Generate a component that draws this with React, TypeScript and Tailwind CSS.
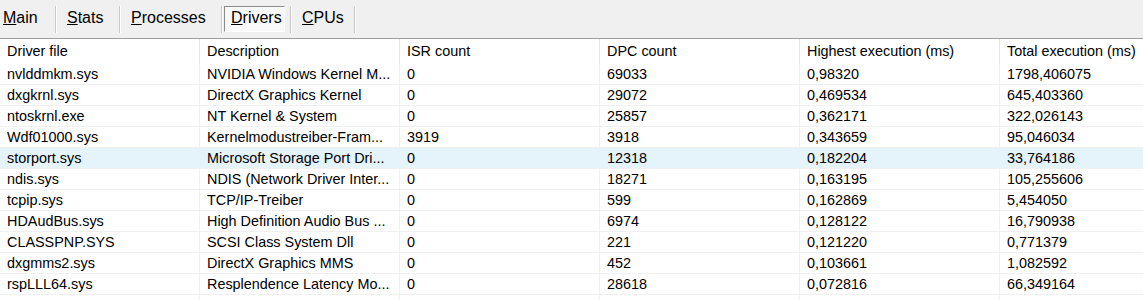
import React from 'react'

const tabs = [
  { key: 'M', rest: 'ain', w: 'w-[55px] pl-[3px]' },
  { key: 'S', rest: 'tats', w: 'w-[62px] pl-[10px]' },
  { key: 'P', rest: 'rocesses', w: 'w-[100px] pl-[10px]' },
]

const columns = ['Driver file', 'Description', 'ISR count', 'DPC count', 'Highest execution (ms)', 'Total execution (ms)']

const rows = [
  ['nvlddmkm.sys', 'NVIDIA Windows Kernel M...', '0', '69033', '0,98320', '1798,406075'],
  ['dxgkrnl.sys', 'DirectX Graphics Kernel', '0', '29072', '0,469534', '645,403360'],
  ['ntoskrnl.exe', 'NT Kernel & System', '0', '25857', '0,362171', '322,026143'],
  ['Wdf01000.sys', 'Kernelmodustreiber-Fram...', '3919', '3918', '0,343659', '95,046034'],
  ['storport.sys', 'Microsoft Storage Port Dri...', '0', '12318', '0,182204', '33,764186'],
  ['ndis.sys', 'NDIS (Network Driver Inter...', '0', '18271', '0,163195', '105,255606'],
  ['tcpip.sys', 'TCP/IP-Treiber', '0', '599', '0,162869', '5,454050'],
  ['HDAudBus.sys', 'High Definition Audio Bus ...', '0', '6974', '0,128122', '16,790938'],
  ['CLASSPNP.SYS', 'SCSI Class System Dll', '0', '221', '0,121220', '0,771379'],
  ['dxgmms2.sys', 'DirectX Graphics MMS', '0', '452', '0,103661', '1,082592'],
  ['rspLLL64.sys', 'Resplendence Latency Mo...', '0', '28618', '0,072816', '66,349164'],
  ['', '', '', '', '', ''],
]

function Sep() {
  return <div className="h-[27px] w-[2px] shrink-0 border-l border-[#c9c9c9] border-r border-r-white" />
}

export default function App() {
  return (
    <div className="h-[300px] w-[1143px] overflow-hidden bg-white text-black font-['Liberation_Sans',Arial,sans-serif]">
      {/* Tab toolbar */}
      <div className="h-[39px] bg-[#f0f0f0] border-b border-[#a0a0a0] flex items-center text-[16px] leading-none">
        {tabs.map(t => (
          <React.Fragment key={t.key}>
            <div className={`${t.w} shrink-0 pb-[2px]`}>
              <span className="underline underline-offset-1">{t.key}</span>{t.rest}
            </div>
            <Sep />
          </React.Fragment>
        ))}
        <div className="ml-[1px] mr-[5px] h-[26px] w-[61px] shrink-0 flex items-center pl-[6px] border border-t-[#8a8a8a] border-l-[#8a8a8a] border-b-white border-r-white bg-[#f9f9f9]">
          <span className="pb-[2px]"><span className="underline underline-offset-1">D</span>rivers</span>
        </div>
        <Sep />
        <div className="w-[62px] pl-[10px] shrink-0 pb-[2px]">
          <span className="underline underline-offset-1">C</span>PUs
        </div>
        <Sep />
      </div>

      {/* Driver table */}
      <div className="text-[14.4px] leading-none">
        <div className="flex h-[25px]">
          {columns.map((c, i) => (
            <div
              key={c}
              className={`w-[200px] shrink-0 flex items-center pl-[7px] ${i < 5 ? 'border-r border-[#e5e5e5]' : ''}`}
            >
              {c}
            </div>
          ))}
        </div>
        {rows.map((r, ri) => (
          <div
            key={ri}
            className={`flex h-[21px] border-b border-[#f0f0f0] ${ri === 4 ? 'bg-[#e5f3fb]' : ''}`}
          >
            {r.map((cell, ci) => (
              <div
                key={ci}
                className={`w-[200px] shrink-0 flex items-center pl-[7px] whitespace-nowrap overflow-hidden ${ci < 5 ? 'border-r border-[#f0f0f0]' : ''}`}
              >
                {cell}
              </div>
            ))}
          </div>
        ))}
      </div>
    </div>
  )
}
